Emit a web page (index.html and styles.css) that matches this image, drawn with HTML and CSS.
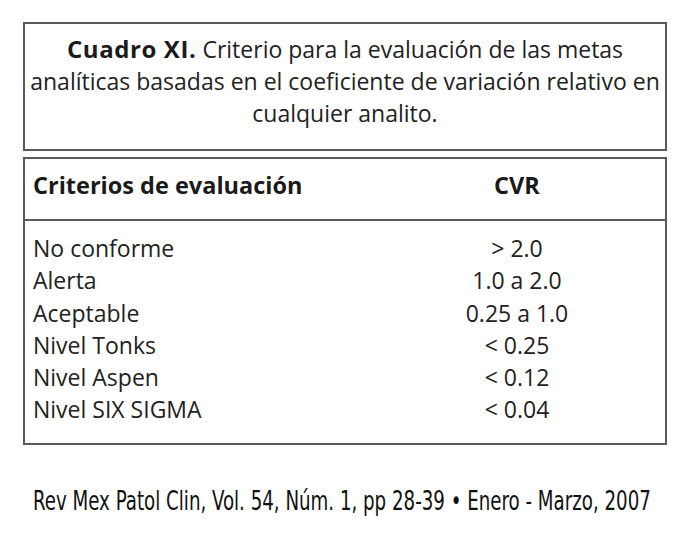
FILE: index.html
```html
<!DOCTYPE html>
<html lang="es">
<head>
<meta charset="utf-8">
<title>Cuadro XI</title>
<link rel="stylesheet" href="styles.css">
</head>
<body>
<main class="page">
  <section class="caption-box">
    <p class="caption"><b>Cuadro XI.</b> Criterio para la evaluación de las metas<br>analíticas basadas en el coeficiente de variación relativo en<br>cualquier analito.</p>
  </section>
  <section class="table-box">
    <div class="head">
      <div class="c1">Criterios de evaluación</div>
      <div class="c2">CVR</div>
    </div>
    <div class="body">
      <div class="c1">No conforme</div><div class="c2">&gt; 2.0</div>
      <div class="c1">Alerta</div><div class="c2">1.0 a 2.0</div>
      <div class="c1">Aceptable</div><div class="c2">0.25 a 1.0</div>
      <div class="c1">Nivel Tonks</div><div class="c2">&lt; 0.25</div>
      <div class="c1">Nivel Aspen</div><div class="c2">&lt; 0.12</div>
      <div class="c1">Nivel SIX SIGMA</div><div class="c2">&lt; 0.04</div>
    </div>
  </section>
  <footer class="ref"><span class="ref-text">Rev Mex Patol Clin, Vol. 54, Núm. 1, pp 28-39 • Enero - Marzo, 2007</span></footer>
</main>
</body>
</html>
```

FILE: styles.css
```css
html, body {
  margin: 0;
  padding: 0;
  background: #fff;
}
body {
  font-family: "Open Sans", Lato, sans-serif;
  color: #222;
  overflow: hidden;
}
.page {
  padding: 22px 0 0 23px;
  width: 644px;
}
.caption-box {
  border: 2px solid #5a5a5a;
  box-sizing: border-box;
  height: 129px;
  padding: 9px 0 0 0;
}
.caption {
  margin: 0;
  text-align: center;
  font-size: 23px;
  line-height: 32px;
  white-space: nowrap;
}
.caption b {
  font-weight: 700;
  font-size: 24px;
  letter-spacing: 0.6px;
  color: #1a1a1a;
}
.table-box {
  margin-top: 6px;
  border: 2px solid #5a5a5a;
  box-sizing: border-box;
  height: 288px;
}
.head, .body {
  display: grid;
  grid-template-columns: 344px 1fr;
}
.head {
  height: 62px;
  border-bottom: 2px solid #5a5a5a;
  box-sizing: border-box;
  align-content: start;
  padding-top: 10px;
  font-weight: 700;
  font-size: 23.5px;
  line-height: 32px;
  color: #1a1a1a;
}
.body {
  padding-top: 11px;
  font-size: 23px;
  line-height: 32.3px;
}
.c1 {
  padding-left: 8px;
}
.c2 {
  text-align: center;
}
.ref {
  margin-top: 40px;
  padding-left: 10px;
  width: 640px;
  overflow: hidden;
  font-family: "DejaVu Sans Condensed", "DejaVu Sans", sans-serif;
  font-size: 27px;
  color: #111;
  white-space: nowrap;
}
.ref-text {
  display: inline-block;
  transform: scaleX(0.75);
  transform-origin: left center;
}
```
